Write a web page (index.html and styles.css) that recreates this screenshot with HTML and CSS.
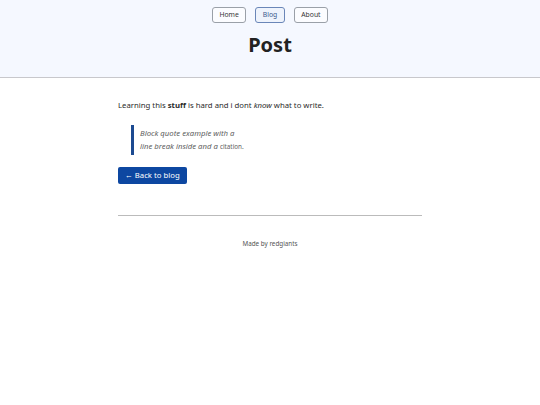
FILE: index.html
```html
<!DOCTYPE html>
<html lang="en">
<head>
<meta charset="utf-8">
<title>Post</title>
<link rel="stylesheet" href="styles.css">
</head>
<body>
<header class="site-header">
  <nav class="nav">
    <a class="nav-link" href="#">Home</a>
    <a class="nav-link active" href="#">Blog</a>
    <a class="nav-link" href="#">About</a>
  </nav>
  <h1 class="title">Post</h1>
</header>
<main class="content">
  <p class="lead">Learning this <strong>stuff</strong> is hard and i dont <em>know</em> what to write.</p>
  <blockquote class="quote">Block quote example with a<br>line break inside and a <cite>citation.</cite></blockquote>
  <a class="back" href="#">&larr; Back to blog</a>
  <hr class="rule">
  <footer class="footer">Made by redgiants</footer>
</main>
</body>
</html>
```
FILE: styles.css
```css
html, body { margin: 0; padding: 0; }
body {
  font-family: "Noto Sans", "Open Sans", sans-serif;
  color: #222;
  background: #fff;
}
.site-header {
  background: #f5f8ff;
  border-bottom: 1px solid #c8c8cc;
  padding-top: 7px;
  height: 70px;
  box-sizing: content-box;
  display: flex;
  flex-direction: column;
  align-items: center;
}
.nav {
  display: flex;
  gap: 9px;
}
.nav-link {
  font-size: 6.8px;
  color: #333;
  text-decoration: none;
  border: 1px solid #9aa0a8;
  border-radius: 3px;
  padding: 3px 6.5px;
  line-height: 8px;
  background: #fbfcff;
}
.nav-link.active {
  color: #3a5a8c;
  border-color: #6a86b8;
  background: #eef3fc;
}
.title {
  margin: 9px 0 0;
  font-size: 20px;
  line-height: 26px;
  font-weight: 700;
  color: #222;
}
.content {
  width: 304px;
  margin: 0 auto;
  padding-top: 21px;
}
.lead {
  margin: 0;
  font-size: 7.75px;
  line-height: 12px;
  color: #2a2a2a;
}
.quote {
  margin: 14px 0 0 13px;
  border-left: 3px solid #1c4a91;
  padding: 2px 0 2px 6px;
  font-style: italic;
  color: #5e5e5e;
  font-size: 7.75px;
  line-height: 13px;
}
.quote cite {
  font-style: normal;
  font-size: 6.3px;
}
.back {
  display: inline-block;
  margin-top: 12px;
  background: #0d47a1;
  color: #fff;
  text-decoration: none;
  font-size: 7.75px;
  line-height: 11px;
  padding: 3px 7px;
  border-radius: 2px;
}
.rule {
  margin: 31px 0 0;
  border: 0;
  border-top: 1px solid #bbb;
}
.footer {
  text-align: center;
  font-size: 6.3px;
  color: #555;
  margin-top: 23px;
}
```
